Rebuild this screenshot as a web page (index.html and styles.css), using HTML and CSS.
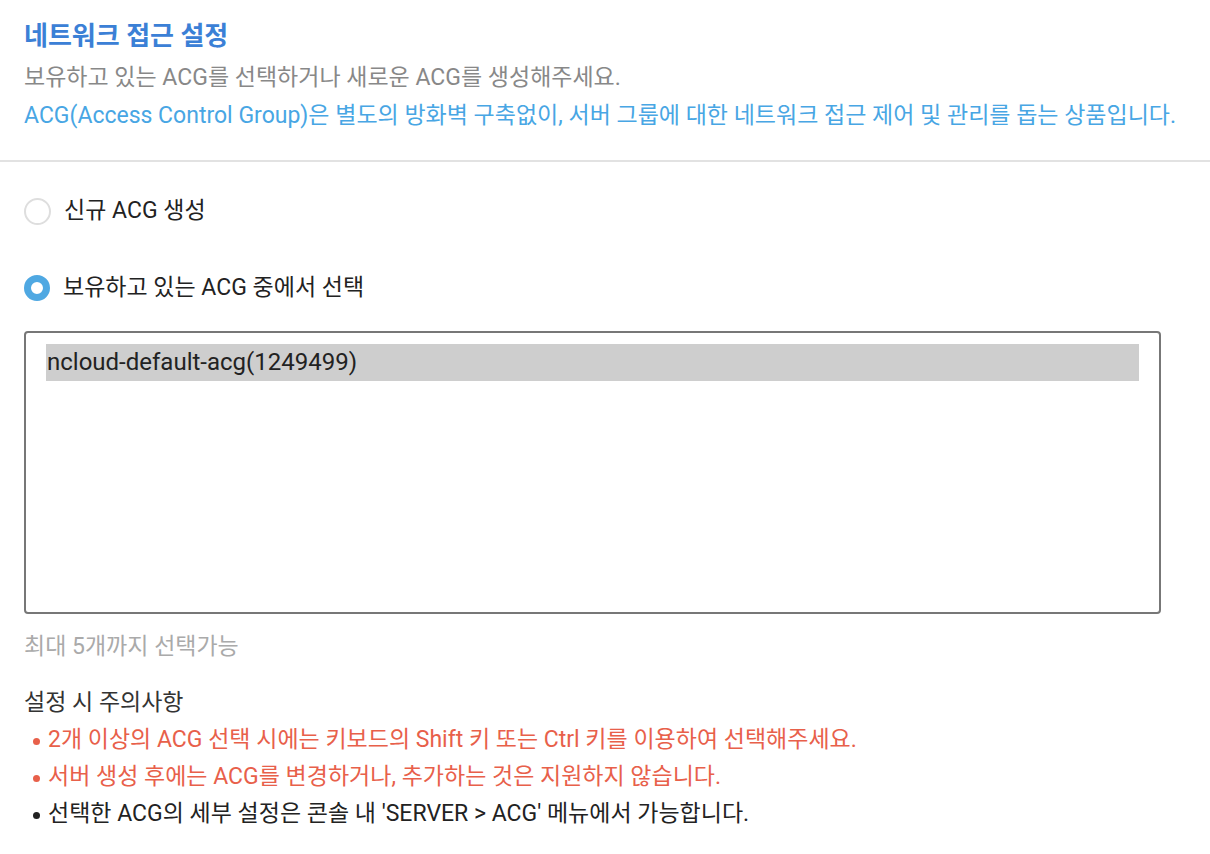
FILE: index.html
```html
<!doctype html>
<html>
<head>
<meta charset="utf-8">
<title>네트워크 접근 설정</title>
<link rel="stylesheet" href="styles.css">
</head>
<body>
<div class="head">
  <h2>네트워크 접근 설정</h2>
  <p class="desc">보유하고 있는 ACG를 선택하거나 새로운 ACG를 생성해주세요.</p>
  <p class="info">ACG(Access Control Group)은 별도의 방화벽 구축없이, 서버 그룹에 대한 네트워크 접근 제어 및 관리를 돕는 상품입니다.</p>
</div>
<div class="body">
  <label class="radio"><span class="dot"></span>신규 ACG 생성</label>
  <label class="radio on"><span class="dot"></span>보유하고 있는 ACG 중에서 선택</label>
  <div class="listbox">
    <div class="opt sel">ncloud-default-acg(1249499)</div>
  </div>
  <p class="hint">최대 5개까지 선택가능</p>
  <p class="note">설정 시 주의사항</p>
  <ul class="notes">
    <li class="warn">2개 이상의 ACG 선택 시에는 키보드의 Shift 키 또는 Ctrl 키를 이용하여 선택해주세요.</li>
    <li class="warn">서버 생성 후에는 ACG를 변경하거나, 추가하는 것은 지원하지 않습니다.</li>
    <li>선택한 ACG의 세부 설정은 콘솔 내 'SERVER &gt; ACG' 메뉴에서 가능합니다.</li>
  </ul>
</div>
</body>
</html>
```
FILE: styles.css
```css
body {
	margin: 0;
	font-family: Roboto, "Noto Sans CJK KR", sans-serif;
	color: #222;
	background: #fff;
}
.head {
	padding: 16px 24px 25px;
	border-bottom: 2px solid #e2e2e2;
}
h2 {
	margin: 0 0 3px;
	font-size: 26px;
	line-height: 40px;
	color: #3b80d6;
	font-weight: bold;
}
.desc, .info {
	margin: 0;
	font-size: 23px;
	line-height: 38px;
}
.desc {
	color: #888;
}
.info {
	color: #48a6e4;
}
.body {
	padding: 35px 24px 0;
}
.radio {
	display: flex;
	align-items: center;
	gap: 13px;
	font-size: 23px;
	line-height: 28px;
	color: #222;
}
.radio + .radio {
	margin-top: 49px;
}
.dot {
	width: 23px;
	height: 23px;
	border: 2px solid #dedede;
	border-radius: 50%;
	box-sizing: content-box;
}
.radio.on .dot {
	width: 12px;
	height: 12px;
	border: 7.5px solid #4fa8e2;
}
.listbox {
	width: 1093px;
	height: 268px;
	border: 2px solid #777;
	border-radius: 4px;
	padding: 11px 20px 0;
	margin-top: 29px;
}
.opt {
	font-size: 24px;
	line-height: 37px;
	padding-left: 1px;
}
.opt.sel {
	background: #cecece;
}
.hint {
	margin: 15px 0 0;
	font-size: 23px;
	line-height: 36px;
	color: #aaa;
}
.note {
	margin: 19px 0 0;
	font-size: 23px;
	line-height: 37px;
	color: #333;
}
.notes {
	list-style: none;
	margin: 0;
	padding: 0;
}
.notes li {
	position: relative;
	padding-left: 24px;
	font-size: 23px;
	line-height: 37px;
	color: #222;
}
.notes li:before {
	content: "";
	position: absolute;
	left: 9px;
	top: 17px;
	width: 7px;
	height: 7px;
	border-radius: 50%;
	background: #222;
}
.notes li.warn {
	color: #e8604a;
}
.notes li.warn:before {
	background: #e8604a;
}
```
